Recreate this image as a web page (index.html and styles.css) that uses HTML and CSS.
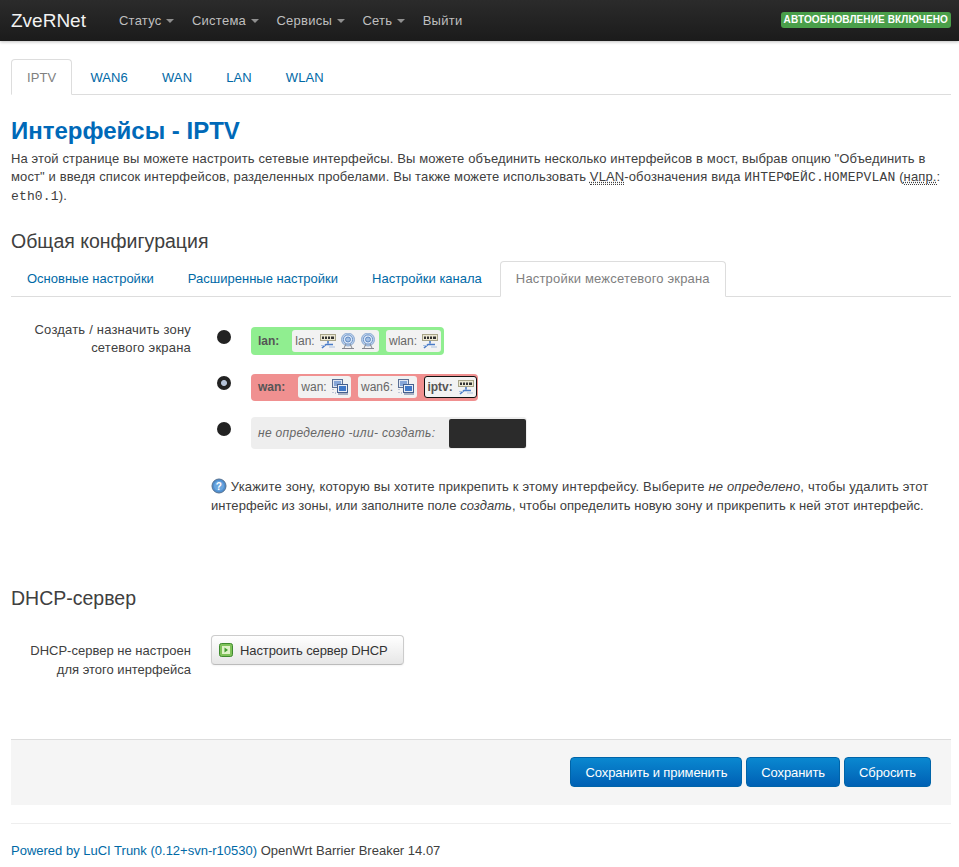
FILE: index.html
```html
<!DOCTYPE html>
<html lang="ru">
<head>
<meta charset="utf-8">
<title>ZveRNet - Интерфейсы - IPTV</title>
<link rel="stylesheet" href="styles.css">
</head>
<body>
<svg class="sprites" width="0" height="0" aria-hidden="true">
  <defs>
    <symbol id="i-switch" viewBox="0 0 16 16">
      <rect x="0.5" y="1.5" width="15" height="6" fill="#ece8d2" stroke="#a8a488"/>
      <path d="M2 3.5h2V6H2zM5 3.5h2V6H5zM8 3.5h2V6H8zM11 3.5h3V6h-3z" fill="#333"/>
      <path d="M8 8v2.5M2 15l4-3.5h7" fill="none" stroke="#4a7cc8" stroke-width="1.6"/>
      <path d="M1 12.5h4M9 14h6" fill="none" stroke="#a9c1e2" stroke-width="1.2"/>
    </symbol>
    <symbol id="i-wifi" viewBox="0 0 16 16">
      <circle cx="8" cy="6.5" r="6.5" fill="#b9d0ec" stroke="#8fabd2"/>
      <circle cx="8" cy="6.5" r="4.6" fill="#e2ecf8" stroke="#6e94c8"/>
      <circle cx="8" cy="6.5" r="2.5" fill="#a0bfe4" stroke="#5f88c2"/>
      <path d="M6 11l-2 4M10 11l2 4" stroke="#85888f"/>
      <path d="M2 15.5h12" stroke="#85888f"/>
    </symbol>
    <symbol id="i-wan" viewBox="0 0 16 16">
      <rect x="0.5" y="0.5" width="10" height="8" fill="#dfe6f2" stroke="#5a6f94"/>
      <rect x="2" y="2" width="7" height="5" fill="#86a6d8"/>
      <rect x="5.5" y="5.5" width="10" height="8" fill="#e9eef6" stroke="#45608e"/>
      <rect x="7" y="7" width="7" height="5" fill="#3f78c8"/>
      <path d="M6 15h10" stroke="#5a6f94"/>
      <path d="M1 10v1M1 13v1M3 14h1" stroke="#8a9cbb"/>
    </symbol>
  </defs>
</svg>

<header class="navbar">
  <a class="brand" href="#">ZveRNet</a>
  <nav class="nav-menu">
    <a href="#">Статус <b class="caret"></b></a>
    <a href="#">Система <b class="caret"></b></a>
    <a href="#">Сервисы <b class="caret"></b></a>
    <a href="#">Сеть <b class="caret"></b></a>
    <a href="#">Выйти</a>
  </nav>
  <span class="badge-auto">АВТООБНОВЛЕНИЕ ВКЛЮЧЕНО</span>
</header>

<main class="container">
  <ul class="tabs tabs-top">
    <li class="active"><a href="#">IPTV</a></li>
    <li><a href="#">WAN6</a></li>
    <li><a href="#">WAN</a></li>
    <li><a href="#">LAN</a></li>
    <li><a href="#">WLAN</a></li>
  </ul>

  <h1>Интерфейсы - IPTV</h1>
  <p class="intro">На этой странице вы можете настроить сетевые интерфейсы. Вы можете объединить несколько интерфейсов в мост, выбрав опцию "Объединить в мост" и введя список интерфейсов, разделенных пробелами. Вы также можете использовать <abbr title="Virtual Local Area Network">VLAN</abbr>-обозначения вида <samp>ИНТЕРФЕЙС.НОМЕРVLAN</samp> (<abbr title="например">напр.</abbr>: <samp>eth0.1</samp>).</p>

  <h2 class="section-general">Общая конфигурация</h2>
  <ul class="tabs tabs-sub">
    <li><a href="#">Основные настройки</a></li>
    <li><a href="#">Расширенные настройки</a></li>
    <li><a href="#">Настройки канала</a></li>
    <li class="active"><a href="#">Настройки межсетевого экрана</a></li>
  </ul>

  <div class="field field-zone">
    <label class="field-label">Создать / назначить зону сетевого экрана</label>
    <div class="field-body">
      <div class="zones">
        <div class="zone-row">
          <span class="radio"></span>
          <div class="zone zone-lan">
            <strong>lan:</strong>
            <span class="net">lan: <svg class="ico"><use href="#i-switch"/></svg><svg class="ico"><use href="#i-wifi"/></svg><svg class="ico"><use href="#i-wifi"/></svg></span>
            <span class="net">wlan: <svg class="ico"><use href="#i-switch"/></svg></span>
          </div>
        </div>
        <div class="zone-row">
          <span class="radio checked"></span>
          <div class="zone zone-wan">
            <strong>wan:</strong>
            <span class="net">wan: <svg class="ico"><use href="#i-wan"/></svg></span>
            <span class="net">wan6: <svg class="ico"><use href="#i-wan"/></svg></span>
            <span class="net net-current">iptv: <svg class="ico"><use href="#i-switch"/></svg></span>
          </div>
        </div>
        <div class="zone-row">
          <span class="radio"></span>
          <div class="zone zone-new">
            <em>не определено -или- создать:</em>
            <span class="zone-input"></span>
          </div>
        </div>
      </div>
      <p class="help"><span class="help-line help-first"><svg class="help-ico" viewBox="0 0 16 16"><circle cx="8" cy="8" r="7" fill="#4f8fd0" stroke="#55708f"/><circle cx="8" cy="8" r="5" fill="#6ba6de"/><text x="8" y="11.5" class="help-mark">?</text></svg> Укажите зону, которую вы хотите прикрепить к этому интерфейсу. Выберите <em>не определено</em>, чтобы удалить этот</span> <span class="help-line help-second">интерфейс из зоны, или заполните поле <em>создать</em>, чтобы определить новую зону и прикрепить к ней этот интерфейс.</span></p>
    </div>
  </div>

  <h2 class="section-dhcp">DHCP-сервер</h2>
  <div class="field field-dhcp">
    <label class="field-label">DHCP-сервер не настроен для этого интерфейса</label>
    <div class="field-body">
      <button class="btn-plain" type="button"><svg class="btn-ico" viewBox="0 0 14 14"><rect x="0.5" y="0.5" width="13" height="13" rx="2" fill="#7fc25a" stroke="#3f8a2f"/><rect x="3" y="3" width="8" height="8" fill="#dff2c8"/><path d="M5.5 4.5l3.5 2.5-3.5 2.5z" fill="#3f9a2f"/></svg>Настроить сервер DHCP</button>
    </div>
  </div>

  <div class="actions">
    <button class="btn-primary" type="button">Сохранить и применить</button>
    <button class="btn-primary" type="button">Сохранить</button>
    <button class="btn-primary" type="button">Сбросить</button>
  </div>

  <footer class="page-footer"><a href="#">Powered by LuCI Trunk (0.12+svn-r10530)</a> OpenWrt Barrier Breaker 14.07</footer>
</main>
</body>
</html>
```

FILE: styles.css
```css
* { box-sizing: border-box; }

html, body { margin: 0; padding: 0; }

body {
  font: 13px/18px "Liberation Sans", Arial, sans-serif;
  color: #404040;
  background: #fff;
}

a { color: #0069a6; text-decoration: none; }

.sprites { position: absolute; }

/* Top bar */
.navbar {
  display: flex;
  align-items: center;
  height: 41px;
  padding: 0 8px 0 11px;
  background: linear-gradient(#2b2b2b, #1b1b1b);
  box-shadow: 0 1px 3px rgba(0, 0, 0, .25);
}

.brand { color: #f2f2f2; font-size: 19px; line-height: 40px; }

.nav-menu { display: flex; margin-left: 33px; gap: 17.5px; letter-spacing: .25px; }
.nav-menu a { color: #bfbfbf; font-size: 13px; }

.caret {
  display: inline-block;
  margin-left: 1px;
  vertical-align: middle;
  border: 4px solid transparent;
  border-top-color: #8f8f8f;
  border-bottom-width: 0;
}

.badge-auto {
  margin-left: auto;
  margin-top: -1px;
  padding: 0 3px;
  height: 16px;
  border-radius: 3px;
  background: #4a9f4a;
  color: #fff;
  font-size: 10px;
  font-weight: bold;
  line-height: 15px;
  letter-spacing: .13px;
}

.container { padding: 18px 8px 0 11px; }

/* Tab strips */
.tabs {
  display: flex;
  margin: 0;
  padding: 0;
  list-style: none;
  border-bottom: 1px solid #ddd;
}

.tabs li { margin-bottom: -1px; margin-right: 2px; }

.tabs a {
  display: block;
  height: 36px;
  border: 1px solid transparent;
  border-radius: 4px 4px 0 0;
}

.tabs .active a {
  color: gray;
  background: #fff;
  border-color: #ddd #ddd #fff;
}

.tabs-top { height: 36px; letter-spacing: .12px; }
.tabs-top a { padding: 9px 15px 7px; }

.tabs-sub { height: 36px; margin-top: 8px; }
.tabs-sub a { padding: 8px 15px; }
.tabs-sub .active a { letter-spacing: .18px; }

h1 {
  margin: 21px 0 0;
  color: #0069b8;
  font-size: 24px;
  line-height: 30px;
  font-weight: bold;
}

.intro { margin: 4px 0 0; letter-spacing: .12px; }

abbr { border-bottom: 1px dotted #404040; }

samp { font-family: "Liberation Mono", monospace; font-size: 13px; letter-spacing: .15px; }

h2 {
  margin: 0;
  color: #404040;
  font-size: 19.5px;
  line-height: 24px;
  font-weight: normal;
}

.section-general { margin-top: 23px; }

/* Form rows */
.field { display: flex; }

.field-label {
  flex: none;
  width: 180px;
  text-align: right;
}

.field-zone .field-label { letter-spacing: .2px; }

.field-body { margin-left: 20px; flex: 1; }

.field-zone { margin-top: 24px; }

.zones { display: flex; flex-direction: column; gap: 14px; margin-top: 4px; }

.zone-row { display: flex; align-items: center; height: 32px; }

.radio {
  flex: none;
  width: 14px;
  height: 14px;
  margin: -9px 20px 0 6px;
  border-radius: 50%;
  background: #222;
}

.radio.checked { background: #222 radial-gradient(circle, #b5c3d8 0 2.5px, #222 3.5px); }

.zone {
  display: flex;
  align-items: center;
  height: 28px;
  border-radius: 4px;
  padding: 0 3px 0 7px;
  gap: 7px;
  font-size: 12px;
  color: #555;
}

.zone strong { margin-right: 6px; }

.zone-lan { background: #90ee90; }
.zone-wan { background: #f09090; height: 27px; padding-right: 1px; }
.zone-new { background: #eee; height: 32px; padding-right: 1px; }
.zone-new em { margin-right: 7px; letter-spacing: .32px; color: #666; }

.net {
  display: inline-flex;
  align-items: center;
  height: 22px;
  padding: 0 3px;
  border-radius: 3px;
  background: #f2f2f2;
  color: #666;
  white-space: pre;
}

.net-current { border: 1px solid #111; padding: 0 2px; font-weight: bold; color: #555; }

.ico { width: 16px; height: 16px; margin-left: 2px; }
.ico + .ico { margin-left: 4px; }

.zone-input {
  width: 77px;
  height: 29px;
  border-radius: 2px;
  background: #2b2b2b;
}

.help { margin: 28px 0 0; line-height: 19px; }
.help-line { display: block; }
.help-first { letter-spacing: .18px; }
.help-second { letter-spacing: .04px; }
.help-ico { width: 16px; height: 16px; vertical-align: -3px; }
.help-mark { font: bold 10px "Liberation Sans", sans-serif; fill: #fff; text-anchor: middle; }

.section-dhcp { margin-top: 71px; }

.field-dhcp { margin-top: 25px; }
.field-dhcp .field-label { padding-top: 6px; line-height: 19px; }

.btn-plain {
  display: flex;
  align-items: center;
  width: 193px;
  height: 30px;
  padding: 0 0 0 7px;
  border: 1px solid #ccc;
  border-bottom-color: #bbb;
  border-radius: 4px;
  background: linear-gradient(#fff, #e6e6e6);
  color: #333;
  font: 13px "Liberation Sans", sans-serif;
  letter-spacing: -.1px;
  box-shadow: 0 1px 2px rgba(0, 0, 0, .05);
}

.btn-ico { width: 14px; height: 14px; margin-right: 7px; }

.actions {
  display: flex;
  justify-content: flex-end;
  gap: 4px;
  height: 66px;
  margin-top: 60px;
  padding: 17px 20px 0 0;
  background: #f5f5f5;
  border-top: 1px solid #ddd;
}

.btn-primary {
  height: 30px;
  padding: 0 14px;
  border: 1px solid #0064a8;
  border-radius: 4px;
  background: linear-gradient(#0a88d0, #0060b4);
  color: #fff;
  font: 13px "Liberation Sans", sans-serif;
  letter-spacing: -.1px;
}

.page-footer {
  margin-top: 18px;
  padding-top: 18px;
  border-top: 1px solid #eee;
}
```
